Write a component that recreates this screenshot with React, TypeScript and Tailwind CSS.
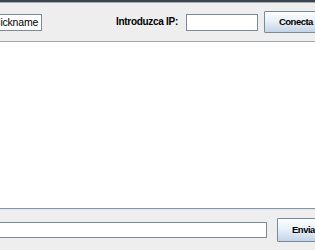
import React from 'react'

const font = { fontFamily: '"Liberation Sans", Arial, sans-serif' }

function Field({ className, children }: { className: string; children?: React.ReactNode }) {
  return (
    <div
      className={`shrink-0 border border-[#7a8a99] bg-white flex items-center text-[10.5px] text-black leading-none overflow-hidden ${className}`}
    >
      {children}
    </div>
  )
}

function Button({ label, className }: { label: string; className: string }) {
  return (
    <div
      className={`shrink-0 border border-[#7a8a99] rounded-[1px] bg-linear-to-b from-[#fdfeff] via-[#e6eef6] to-[#c3d4e6] flex items-center text-[9.5px] font-bold tracking-[-0.5px] text-black leading-none ${className}`}
    >
      {label}
    </div>
  )
}

export default function App() {
  return (
    <div className="w-[315px] h-[250px] overflow-hidden bg-[#eeeeee] flex flex-col" style={font}>
      {/* window frame edge */}
      <div className="h-[2px] bg-[#3b4550] shrink-0" />
      <div className="h-px bg-[#a4abb3] shrink-0" />

      {/* connection bar */}
      <div className="h-[38px] shrink-0 flex items-center">
        <Field className="ml-[-11px] w-[53px] h-[17px] pl-[3px] tracking-[-0.2px]">Nickname</Field>
        <span className="ml-[74px] text-[10px] font-bold tracking-[-0.3px] text-black leading-none shrink-0">
          Introduzca IP:
        </span>
        <Field className="ml-[8px] w-[72px] h-[17px]" />
        <Button label="Conecta" className="ml-[6px] w-[70px] h-[22px] pl-[14px]" />
      </div>

      {/* chat area */}
      <div className="flex-1 bg-white border-t border-[#a3a9b0] border-b border-b-[#8797a7]" />
      <div className="h-px bg-[#dfe4ea] shrink-0" />

      {/* message bar */}
      <div className="h-[40px] shrink-0 flex items-center">
        <Field className="ml-[-2px] w-[269px] h-[16px]" />
        <Button label="Envia" className="ml-[10px] w-[50px] h-[24px] pl-[14px]" />
      </div>
    </div>
  )
}
